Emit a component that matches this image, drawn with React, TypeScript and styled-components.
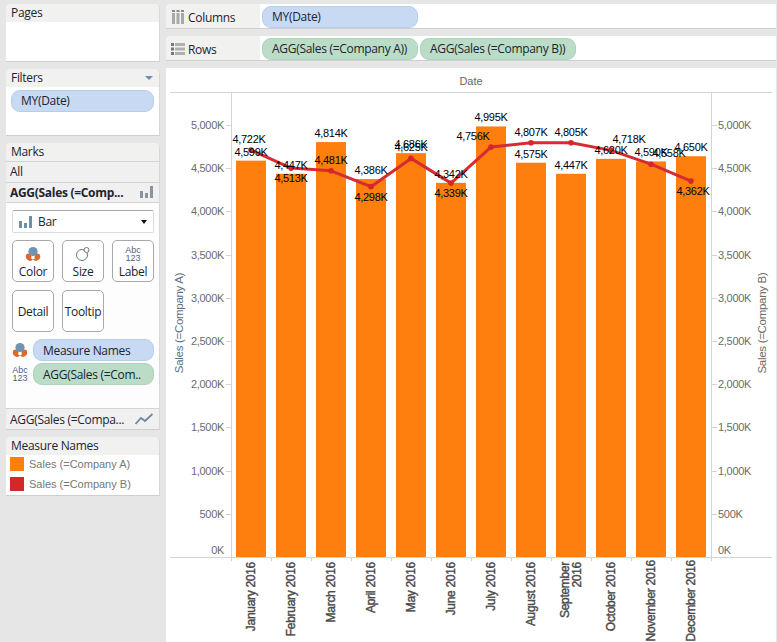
import React from "react";
import styled, { createGlobalStyle } from "styled-components";

const Global = createGlobalStyle`
  html, body { margin: 0; padding: 0; background: #e6e6e6; }
  body { width: 777px; height: 642px; overflow: hidden; }
  #root { width: 777px; height: 642px; }
`;

const UI = `"Open Sans", "Noto Sans", sans-serif`;
const ARIAL = `"Liberation Sans", Arial, sans-serif`;

const Page = styled.div`
  display: grid;
  grid-template-columns: 154px 610px;
  column-gap: 6px;
  padding: 4px 0 0 6px;
  height: 638px;
  overflow: hidden;
  font-family: ${UI};
  font-size: 12px;
  letter-spacing: -0.3px;
  color: #1c2430;
`;

const Side = styled.div`
  display: flex;
  flex-direction: column;
  gap: 7px;
`;

const Card = styled.section<{ $h: number }>`
  height: ${(p) => p.$h}px;
  box-sizing: border-box;
  background: #fff;
  border-radius: 5px 5px 0 0;
  border-bottom: 1px solid #cfcfcf;
  border-right: 1px solid #d8d8d8;
  display: flex;
  flex-direction: column;
  overflow: hidden;
`;

const CardHead = styled.header`
  height: 18px;
  flex: none;
  background: #f1f1f0;
  display: flex;
  align-items: center;
  justify-content: space-between;
  padding: 0 6px 0 5px;
  line-height: 18px;
`;

const Caret = styled.span`
  width: 0;
  height: 0;
  border-left: 4px solid transparent;
  border-right: 4px solid transparent;
  border-top: 4px solid #6d8db5;
`;

const Pill = styled.div<{ $green?: boolean; $width?: number }>`
  box-sizing: border-box;
  height: 22px;
  width: ${(p) => (p.$width ? `${p.$width}px` : "auto")};
  flex: none;
  background: ${(p) => (p.$green ? "#bbdcc7" : "#c8d9f3")};
  border: 1px solid ${(p) => (p.$green ? "#aed3bb" : "#b7cdec")};
  border-radius: 9px;
  padding: 0 0 0 9px;
  line-height: 20px;
  white-space: nowrap;
  overflow: hidden;
`;

const EncodingPill = styled(Pill)`
  line-height: 21px;
`;

const FilterBody = styled.div`
  padding: 3px 5px 0;
`;

const MarksRow = styled.div<{ $bold?: boolean; $h: number }>`
  height: ${(p) => p.$h}px;
  box-sizing: border-box;
  flex: none;
  background: #f0f0f1;
  border-top: 1px solid #d4d4d4;
  display: flex;
  align-items: center;
  justify-content: space-between;
  padding: 0 6px 1px 4px;
  font-weight: ${(p) => (p.$bold ? 700 : 400)};
  white-space: nowrap;
`;

const MarksFooter = styled(MarksRow)`
  padding-bottom: 0;
`;

const MarksBody = styled.div`
  flex: 1;
  background: #fdfdfd;
  border-top: 1px solid #d4d4d4;
  padding: 7px 5px 0 6px;
  display: flex;
  flex-direction: column;
`;

const TypeSelect = styled.div`
  box-sizing: border-box;
  height: 23px;
  width: 142px;
  background: #fff;
  border: 1px solid #dcdcdc;
  border-top-color: #a9a9a9;
  border-radius: 2px;
  display: flex;
  align-items: center;
  gap: 6px;
  padding: 0 6px;
`;

const DropCaret = styled.span`
  margin-left: auto;
  width: 0;
  height: 0;
  border-left: 3.5px solid transparent;
  border-right: 3.5px solid transparent;
  border-top: 4px solid #111;
`;

const ButtonGrid = styled.div`
  display: grid;
  grid-template-columns: repeat(3, 42px);
  grid-auto-rows: 42px;
  gap: 8px;
  margin-top: 7px;
`;

const MarkButton = styled.div`
  box-sizing: border-box;
  background: #fff;
  border: 1px solid #a8a8a8;
  border-radius: 5px;
  display: flex;
  flex-direction: column;
  align-items: center;
  justify-content: flex-end;
  padding-bottom: 1px;
  line-height: 16px;
`;

const PlainButton = styled(MarkButton)`
  justify-content: center;
  padding: 1px 0 0;
`;

const IconSlot = styled.div`
  height: 20px;
  display: flex;
  align-items: center;
  justify-content: center;
`;

const AbcStack = styled.div`
  font-family: ${ARIAL};
  letter-spacing: 0;
  font-size: 9px;
  line-height: 8px;
  text-align: center;
  color: #4f647f;
  width: 20px;
`;

const EncodingList = styled.div`
  display: flex;
  flex-direction: column;
  gap: 2px;
  margin-top: 7px;
`;

const Encoding = styled.div`
  display: flex;
  align-items: center;
  gap: 5px;
`;

const EncIcon = styled.div`
  width: 16px;
  display: flex;
  justify-content: center;
`;

const LegendRow = styled.div`
  height: 20px;
  box-sizing: border-box;
  padding: 0 0 2px 4px;
  display: flex;
  align-items: center;
  gap: 5px;
  font-family: ${ARIAL};
  font-size: 11px;
  letter-spacing: 0;
  color: #777;
`;

const Swatch = styled.span<{ $c: string }>`
  width: 14px;
  height: 14px;
  background: ${(p) => p.$c};
`;

const Main = styled.div`
  display: flex;
  flex-direction: column;
  gap: 7px;
`;

const Shelf = styled.div`
  height: 25px;
  box-sizing: border-box;
  background: #fff;
  border-radius: 5px 0 0 0;
  border-bottom: 1px solid #cfcfcf;
  display: flex;
  overflow: hidden;
`;

const ShelfLabel = styled.div`
  width: 94px;
  flex: none;
  background: #f1f1f0;
  display: flex;
  align-items: center;
  gap: 3px;
  padding: 2px 0 0 5px;
  box-sizing: border-box;
`;

const ShelfPills = styled.div`
  display: flex;
  gap: 2px;
  padding: 2px 0 0 2px;
  align-items: flex-start;
`;

const ChartPanel = styled.div`
  flex: 1;
  background: #fff;
  padding: 0 4px 0 4px;
  overflow: hidden;
  display: flex;
  flex-direction: column;
`;

const DateHeader = styled.div`
  height: 25px;
  flex: none;
  box-sizing: border-box;
  border-bottom: 1px solid #d4d4d4;
  text-align: center;
  font-family: ${ARIAL};
  font-size: 11px;
  letter-spacing: 0;
  line-height: 26px;
  color: #666;
`;

const Plot = styled.svg`
  display: block;
  flex: none;
  width: 602px;
  height: 549px;
  font-family: ${ARIAL};
`;

const ColorIcon = () => (
  <svg width="16" height="16" viewBox="0 0 16 16">
    <path d="M1.5 9a4 4 0 0 0 6.5 4.5a5 5 0 0 1-3-5z" fill="#d9642a" />
    <path d="M14.5 9a4 4 0 0 1-6.5 4.5a5 5 0 0 0 3-5z" fill="#e0702c" />
    <circle cx="3.6" cy="10.4" r="2.8" fill="#dd6a28" />
    <circle cx="12.4" cy="10.4" r="2.8" fill="#dd6a28" />
    <circle cx="8" cy="5.5" r="4.6" fill="#6d94b5" />
  </svg>
);

const SizeIcon = () => (
  <svg width="16" height="16" viewBox="0 0 16 16" fill="#fff" stroke="#6e7480" strokeWidth="1">
    <circle cx="7" cy="9" r="5.5" />
    <circle cx="11.5" cy="4" r="2.5" />
  </svg>
);

const BarIcon = ({ c = "#6f8ea8" }: { c?: string }) => (
  <svg width="13" height="12" viewBox="0 0 13 12" fill={c}>
    <rect x="0" y="5" width="3" height="7" />
    <rect x="5" y="7" width="3" height="5" />
    <rect x="10" y="0" width="3" height="12" />
  </svg>
);

const LineIcon = () => (
  <svg width="18" height="12" viewBox="0 0 18 12" fill="none" stroke="#74859a" strokeWidth="1.8">
    <path d="M0.5 11 L6 5 L10 8 L17.5 1" />
  </svg>
);

const ColumnsIcon = () => (
  <svg width="14" height="14" viewBox="-1 0 14 14" fill="#a9a9a9">
    <rect x="0" y="0" width="3" height="2" fill="#8a8a8a" />
    <rect x="4.5" y="0" width="3" height="2" fill="#8a8a8a" />
    <rect x="9" y="0" width="3" height="2" fill="#8a8a8a" />
    <rect x="0" y="3" width="3" height="11" />
    <rect x="4.5" y="3" width="3" height="11" />
    <rect x="9" y="3" width="3" height="11" />
  </svg>
);

const RowsIcon = () => (
  <svg width="14" height="12" viewBox="0 0 14 12" fill="#b0b0b0">
    <rect x="0" y="0" width="3" height="3" fill="#777" />
    <rect x="0" y="4.5" width="3" height="3" fill="#777" />
    <rect x="0" y="9" width="3" height="3" fill="#777" />
    <rect x="4" y="0" width="10" height="3" />
    <rect x="4" y="4.5" width="10" height="3" />
    <rect x="4" y="9" width="10" height="3" />
  </svg>
);

const Abc = () => (
  <AbcStack>
    <div>Abc</div>
    <div>123</div>
  </AbcStack>
);

const BASE = 558;
const SCALE = 0.0864;
const X0 = 251;
const STEP = 40;

type Month = {
  name: string[];
  top?: number;
  a: number;
  aLabel: string;
  b: number;
  bLabel: string;
  bx?: number;
  by: number;
};

const MONTHS: Month[] = [
  { name: ["January 2016"], a: 4599, aLabel: "4,599K", b: 4722, bLabel: "4,722K", bx: 249, by: 139 },
  { name: ["February 2016"], a: 4447, aLabel: "4,447K", b: 4513, bLabel: "4,513K", by: 178 },
  { name: ["March 2016"], a: 4814, aLabel: "4,814K", b: 4481, bLabel: "4,481K", by: 160 },
  { name: ["April 2016"], a: 4386, aLabel: "4,386K", b: 4298, bLabel: "4,298K", by: 197 },
  { name: ["May 2016"], a: 4686, aLabel: "4,686K", b: 4625, bLabel: "4,625K", by: 147 },
  { name: ["June 2016"], a: 4342, aLabel: "4,342K", b: 4339, bLabel: "4,339K", by: 193 },
  { name: ["July 2016"], a: 4995, aLabel: "4,995K", b: 4756, bLabel: "4,756K", bx: 473, by: 136 },
  { name: ["August 2016"], a: 4575, aLabel: "4,575K", b: 4807, bLabel: "4,807K", by: 132 },
  { name: ["September", "2016"], a: 4447, aLabel: "4,447K", b: 4805, bLabel: "4,805K", by: 132 },
  { name: ["October 2016"], a: 4620, aLabel: "4,620K", b: 4718, bLabel: "4,718K", bx: 629, by: 139 },
  { name: ["November 2016"], top: 560, a: 4590, aLabel: "4,590K", b: 4558, bLabel: "4,558K", bx: 669, by: 153 },
  { name: ["December 2016"], top: 560, a: 4650, aLabel: "4,650K", b: 4362, bLabel: "4,362K", bx: 693, by: 191 },
];

const TICKS = [
  "0K", "500K", "1,000K", "1,500K", "2,000K", "2,500K",
  "3,000K", "3,500K", "4,000K", "4,500K", "5,000K",
];

const barTop = (v: number) => BASE - v * SCALE;

const Chart = () => {
  const pts = MONTHS.map((m, i) => [X0 + i * STEP, barTop(m.b)] as const);
  return (
    <Plot viewBox="170 93 602 549">
      {MONTHS.map((m, i) => (
        <rect key={m.bLabel} x={236 + i * STEP} y={barTop(m.a)} width={30} height={557 - barTop(m.a)} fill="#ff7f0e" />
      ))}
      <line x1="231.5" y1="93" x2="231.5" y2="561" stroke="#d4d4d4" />
      <line x1="711.5" y1="93" x2="711.5" y2="557" stroke="#d4d4d4" />
      <line x1="170" y1="557.5" x2="772" y2="557.5" stroke="#d4d4d4" />
      {MONTHS.map((_, i) => (
        <line key={i} x1={271.5 + i * STEP} y1="557" x2={271.5 + i * STEP} y2="561" stroke="#d4d4d4" />
      ))}
      {TICKS.map((t, i) => {
        const y = Math.round(557 - i * 43.2) + 0.5;
        return (
          <g key={t}>
            <line x1="226" y1={y} x2="231" y2={y} stroke="#d4d4d4" />
            <line x1="712" y1={y} x2="717" y2={y} stroke="#d4d4d4" />
            <text x="224" y={y - (i === 0 ? 7 : 0) + 3} textAnchor="end" fontSize="11" fill="#6b6b6b">{t}</text>
            <text x="718" y={y - (i === 0 ? 7 : 0) + 3} fontSize="11" fill="#6b6b6b">{t}</text>
          </g>
        );
      })}
      <text transform="translate(183 323) rotate(-90)" textAnchor="middle" fontSize="11.5" fill="#5c6f88">Sales (=Company A)</text>
      <text transform="translate(766 323) rotate(-90)" textAnchor="middle" fontSize="11.5" fill="#6f6a66">Sales (=Company B)</text>
      <polyline points={pts.map((p) => p.join(",")).join(" ")} fill="none" stroke="#d62c31" strokeWidth="3" strokeLinejoin="round" />
      {pts.map(([x, y]) => (
        <circle key={x} cx={x} cy={y} r="2.8" fill="#d62728" />
      ))}
      {MONTHS.map((m, i) => (
        <g key={m.aLabel + i} fontSize="11" fill="#000" textAnchor="middle">
          <text x={X0 + i * STEP} y={barTop(m.a) - 5}>{m.aLabel}</text>
          <text x={m.bx ?? X0 + i * STEP} y={m.by + 4}>{m.bLabel}</text>
        </g>
      ))}
      {MONTHS.map((m, i) => (
        <text
          key={m.name[0]}
          transform={`translate(${X0 + i * STEP + (m.name.length > 1 ? -2 : 4)} ${m.top ?? 562}) rotate(-90)`}
          textAnchor="end"
          fontSize="12"
          fill="#4a4a4a"
          stroke="#4a4a4a"
          strokeWidth="0.4"
        >
          {m.name.map((line, j) => (
            <tspan key={line} x="0" dy={j === 0 ? 0 : 12}>{line}</tspan>
          ))}
        </text>
      ))}
    </Plot>
  );
};

export default function App() {
  return (
    <>
      <Global />
      <Page>
        <Side>
          <Card $h={58}>
            <CardHead>Pages</CardHead>
          </Card>
          <Card $h={67}>
            <CardHead>
              Filters
              <Caret />
            </CardHead>
            <FilterBody>
              <Pill>MY(Date)</Pill>
            </FilterBody>
          </Card>
          <Card $h={287}>
            <CardHead>Marks</CardHead>
            <MarksRow $h={21}>All</MarksRow>
            <MarksRow $h={20} $bold>
              AGG(Sales (=Comp...
              <BarIcon c="#8a949e" />
            </MarksRow>
            <MarksBody>
              <TypeSelect>
                <BarIcon />
                Bar
                <DropCaret />
              </TypeSelect>
              <ButtonGrid>
                <MarkButton>
                  <IconSlot><ColorIcon /></IconSlot>
                  Color
                </MarkButton>
                <MarkButton>
                  <IconSlot><SizeIcon /></IconSlot>
                  Size
                </MarkButton>
                <MarkButton>
                  <IconSlot><Abc /></IconSlot>
                  Label
                </MarkButton>
                <PlainButton>Detail</PlainButton>
                <PlainButton>Tooltip</PlainButton>
              </ButtonGrid>
              <EncodingList>
                <Encoding>
                  <EncIcon><ColorIcon /></EncIcon>
                  <EncodingPill $width={121}>Measure Names</EncodingPill>
                </Encoding>
                <Encoding>
                  <EncIcon><Abc /></EncIcon>
                  <EncodingPill $width={121} $green>AGG(Sales (=Com..</EncodingPill>
                </Encoding>
              </EncodingList>
            </MarksBody>
            <MarksFooter $h={21}>
              AGG(Sales (=Compa...
              <LineIcon />
            </MarksFooter>
          </Card>
          <Card $h={59}>
            <CardHead>Measure Names</CardHead>
            <LegendRow><Swatch $c="#ff7f0e" />Sales (=Company A)</LegendRow>
            <LegendRow><Swatch $c="#d62728" />Sales (=Company B)</LegendRow>
          </Card>
        </Side>
        <Main>
          <Shelf>
            <ShelfLabel><ColumnsIcon />Columns</ShelfLabel>
            <ShelfPills>
              <Pill $width={156}>MY(Date)</Pill>
            </ShelfPills>
          </Shelf>
          <Shelf>
            <ShelfLabel><RowsIcon />Rows</ShelfLabel>
            <ShelfPills>
              <Pill $width={156} $green>AGG(Sales (=Company A))</Pill>
              <Pill $width={156} $green>AGG(Sales (=Company B))</Pill>
            </ShelfPills>
          </Shelf>
          <ChartPanel>
            <DateHeader>Date</DateHeader>
            <Chart />
          </ChartPanel>
        </Main>
      </Page>
    </>
  );
}
